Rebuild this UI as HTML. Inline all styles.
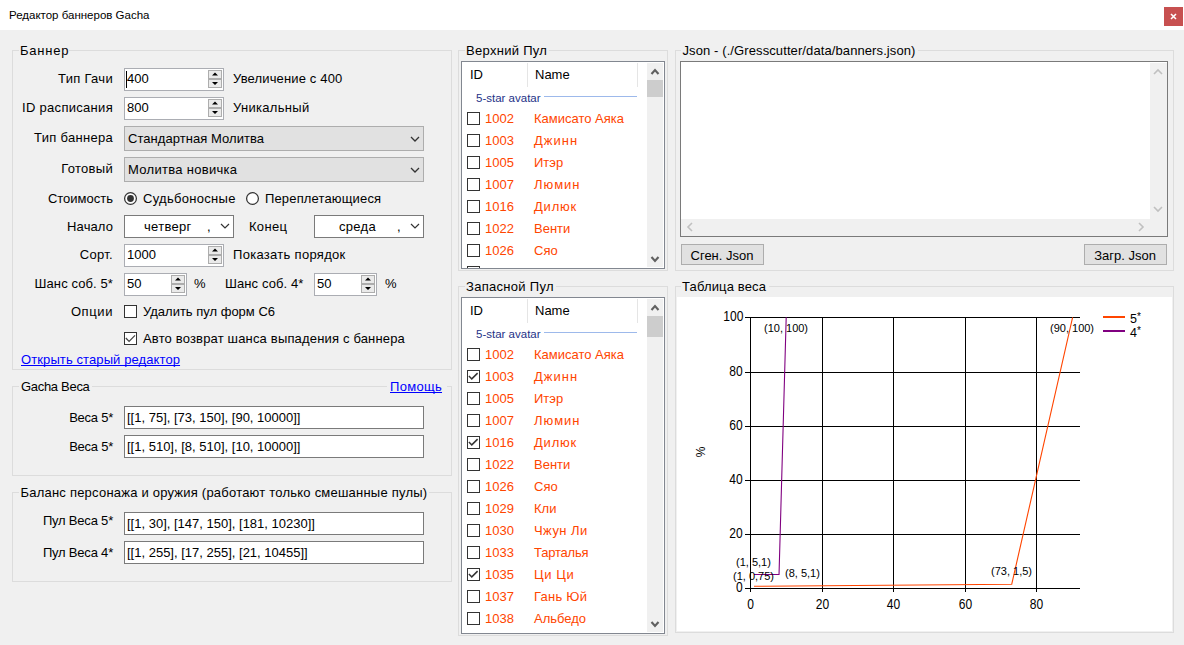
<!DOCTYPE html>
<html><head><meta charset="utf-8"><style>
html,body{margin:0;padding:0;}
body{width:1184px;height:645px;position:relative;overflow:hidden;background:#f0f0f0;font-family:"Liberation Sans",sans-serif;font-size:13px;color:#000;}
.t{position:absolute;white-space:nowrap;}
.r{position:absolute;}
svg.r{overflow:visible;}
</style></head><body>

<div class="r" style="left:0px;top:0px;width:1184px;height:30px;background:#fff;"></div>
<div class="t" style="left:9px;top:8px;font-size:11.5px;line-height:15px;color:#000;">Редактор баннеров Gacha</div>
<div class="r" style="left:1164px;top:7px;width:19px;height:19px;background:#c75050;"></div>
<svg class="r" style="left:1164px;top:7px" width="19" height="19"><path d="M7 7 L12 12 M12 7 L7 12" stroke="#fff" stroke-width="1.6"/></svg>
<div class="r" style="left:12px;top:50px;width:440px;height:320px;border:1px solid #dcdcdc;box-sizing:border-box;"></div>
<div class="r" style="left:19px;top:50px;width:50px;height:1px;background:#f0f0f0;"></div>
<div class="t" style="left:20px;top:43px;font-size:13px;line-height:15px;color:#000;letter-spacing:0.8px;">Баннер</div>
<div class="t" style="right:1071px;top:71px;font-size:13px;line-height:15px;color:#000;text-align:right;letter-spacing:0.3px;">Тип Гачи</div>
<div class="r" style="left:124px;top:68px;width:100px;height:23px;border:1px solid #abadb3;box-sizing:border-box;background:#fff;"></div>
<div class="r" style="left:208px;top:70px;width:14px;height:9px;border:1px solid #adadad;box-sizing:border-box;background:#eaeaea;"></div>
<div class="r" style="left:208px;top:79px;width:14px;height:9px;border:1px solid #adadad;box-sizing:border-box;background:#eaeaea;"></div>
<svg class="r" style="left:208px;top:70px" width="14" height="18"><path d="M4.0 5.5 L7.0 2.5 L10.0 5.5Z M4.0 12 L7.0 15 L10.0 12Z" fill="#000"/></svg>
<div class="t" style="left:127px;top:71px;font-size:13px;line-height:15px;color:#000;">400</div>
<div class="r" style="left:126px;top:71px;width:1px;height:17px;background:#000;"></div>
<div class="t" style="left:233px;top:71px;font-size:13px;line-height:15px;color:#000;letter-spacing:0.15px;">Увеличение с 400</div>
<div class="t" style="right:1071px;top:100px;font-size:13px;line-height:15px;color:#000;text-align:right;letter-spacing:0.3px;">ID расписания</div>
<div class="r" style="left:124px;top:97px;width:100px;height:23px;border:1px solid #abadb3;box-sizing:border-box;background:#fff;"></div>
<div class="r" style="left:208px;top:99px;width:14px;height:9px;border:1px solid #adadad;box-sizing:border-box;background:#eaeaea;"></div>
<div class="r" style="left:208px;top:108px;width:14px;height:9px;border:1px solid #adadad;box-sizing:border-box;background:#eaeaea;"></div>
<svg class="r" style="left:208px;top:99px" width="14" height="18"><path d="M4.0 5.5 L7.0 2.5 L10.0 5.5Z M4.0 12 L7.0 15 L10.0 12Z" fill="#000"/></svg>
<div class="t" style="left:127px;top:100px;font-size:13px;line-height:15px;color:#000;">800</div>
<div class="t" style="left:233px;top:100px;font-size:13px;line-height:15px;color:#000;letter-spacing:0.3px;">Уникальный</div>
<div class="t" style="right:1071px;top:130px;font-size:13px;line-height:15px;color:#000;text-align:right;letter-spacing:0.3px;">Тип баннера</div>
<div class="r" style="left:124px;top:126px;width:300px;height:25px;border:1px solid #adadad;box-sizing:border-box;background:#e1e1e1;"></div>
<div class="t" style="left:128px;top:131px;font-size:13px;line-height:15px;color:#000;letter-spacing:0.05px;">Стандартная Молитва</div>
<svg class="r" style="left:405.0px;top:128.5px" width="20" height="20"><path d="M6.0 8.0 L10.0 12.0 L14.0 8.0" fill="none" stroke="#333" stroke-width="1.3"/></svg>
<div class="t" style="right:1071px;top:161px;font-size:13px;line-height:15px;color:#000;text-align:right;letter-spacing:0.3px;">Готовый</div>
<div class="r" style="left:124px;top:157px;width:300px;height:25px;border:1px solid #adadad;box-sizing:border-box;background:#e1e1e1;"></div>
<div class="t" style="left:128px;top:162px;font-size:13px;line-height:15px;color:#000;letter-spacing:0.3px;">Молитва новичка</div>
<svg class="r" style="left:405.0px;top:159.5px" width="20" height="20"><path d="M6.0 8.0 L10.0 12.0 L14.0 8.0" fill="none" stroke="#333" stroke-width="1.3"/></svg>
<div class="t" style="right:1071px;top:191px;font-size:13px;line-height:15px;color:#000;text-align:right;letter-spacing:0px;">Стоимость</div>
<svg class="r" style="left:124px;top:192.0px" width="13" height="13"><circle cx="6.5" cy="6.5" r="5.9" fill="#fff" stroke="#333" stroke-width="1.25"/><circle cx="6.5" cy="6.5" r="3.4" fill="#333"/></svg>
<div class="t" style="left:143px;top:191px;font-size:13px;line-height:15px;color:#000;letter-spacing:0.3px;">Судьбоносные</div>
<svg class="r" style="left:246px;top:192.0px" width="13" height="13"><circle cx="6.5" cy="6.5" r="5.9" fill="#fff" stroke="#333" stroke-width="1.25"/></svg>
<div class="t" style="left:265px;top:191px;font-size:13px;line-height:15px;color:#000;letter-spacing:0.15px;">Переплетающиеся</div>
<div class="t" style="right:1071px;top:219px;font-size:13px;line-height:15px;color:#000;text-align:right;letter-spacing:0.1px;">Начало</div>
<div class="r" style="left:124px;top:215px;width:110px;height:23px;border:1px solid #7a7a7a;box-sizing:border-box;background:#fff;"></div>
<div class="t" style="left:144px;top:219px;font-size:13px;line-height:15px;color:#000;letter-spacing:0.3px;">четверг</div>
<div class="t" style="left:207px;top:219px;font-size:13px;line-height:15px;color:#000;">,</div>
<svg class="r" style="left:215.0px;top:216.0px" width="20" height="20"><path d="M6.0 8.0 L10.0 12.0 L14.0 8.0" fill="none" stroke="#333" stroke-width="1.2"/></svg>
<div class="t" style="left:249px;top:219px;font-size:13px;line-height:15px;color:#000;letter-spacing:0.3px;">Конец</div>
<div class="r" style="left:314px;top:215px;width:110px;height:23px;border:1px solid #7a7a7a;box-sizing:border-box;background:#fff;"></div>
<div class="t" style="left:339px;top:219px;font-size:13px;line-height:15px;color:#000;letter-spacing:0.3px;">среда</div>
<div class="t" style="left:397px;top:219px;font-size:13px;line-height:15px;color:#000;">,</div>
<svg class="r" style="left:405.0px;top:216.0px" width="20" height="20"><path d="M6.0 8.0 L10.0 12.0 L14.0 8.0" fill="none" stroke="#333" stroke-width="1.2"/></svg>
<div class="t" style="right:1071px;top:247px;font-size:13px;line-height:15px;color:#000;text-align:right;letter-spacing:0.3px;">Сорт.</div>
<div class="r" style="left:124px;top:244px;width:100px;height:23px;border:1px solid #abadb3;box-sizing:border-box;background:#fff;"></div>
<div class="r" style="left:208px;top:246px;width:14px;height:9px;border:1px solid #adadad;box-sizing:border-box;background:#eaeaea;"></div>
<div class="r" style="left:208px;top:255px;width:14px;height:9px;border:1px solid #adadad;box-sizing:border-box;background:#eaeaea;"></div>
<svg class="r" style="left:208px;top:246px" width="14" height="18"><path d="M4.0 5.5 L7.0 2.5 L10.0 5.5Z M4.0 12 L7.0 15 L10.0 12Z" fill="#000"/></svg>
<div class="t" style="left:127px;top:247px;font-size:13px;line-height:15px;color:#000;">1000</div>
<div class="t" style="left:233px;top:247px;font-size:13px;line-height:15px;color:#000;letter-spacing:0.3px;">Показать порядок</div>
<div class="t" style="right:1071px;top:276px;font-size:13px;line-height:15px;color:#000;text-align:right;letter-spacing:0.1px;">Шанс соб. 5*</div>
<div class="r" style="left:124px;top:273px;width:63px;height:23px;border:1px solid #abadb3;box-sizing:border-box;background:#fff;"></div>
<div class="r" style="left:171px;top:275px;width:14px;height:9px;border:1px solid #adadad;box-sizing:border-box;background:#eaeaea;"></div>
<div class="r" style="left:171px;top:284px;width:14px;height:9px;border:1px solid #adadad;box-sizing:border-box;background:#eaeaea;"></div>
<svg class="r" style="left:171px;top:275px" width="14" height="18"><path d="M4.0 5.5 L7.0 2.5 L10.0 5.5Z M4.0 12 L7.0 15 L10.0 12Z" fill="#000"/></svg>
<div class="t" style="left:127px;top:276px;font-size:13px;line-height:15px;color:#000;">50</div>
<div class="t" style="left:194px;top:276px;font-size:13px;line-height:15px;color:#000;">%</div>
<div class="t" style="left:225px;top:276px;font-size:13px;line-height:15px;color:#000;letter-spacing:0.1px;">Шанс соб. 4*</div>
<div class="r" style="left:314px;top:273px;width:63px;height:23px;border:1px solid #abadb3;box-sizing:border-box;background:#fff;"></div>
<div class="r" style="left:361px;top:275px;width:14px;height:9px;border:1px solid #adadad;box-sizing:border-box;background:#eaeaea;"></div>
<div class="r" style="left:361px;top:284px;width:14px;height:9px;border:1px solid #adadad;box-sizing:border-box;background:#eaeaea;"></div>
<svg class="r" style="left:361px;top:275px" width="14" height="18"><path d="M4.0 5.5 L7.0 2.5 L10.0 5.5Z M4.0 12 L7.0 15 L10.0 12Z" fill="#000"/></svg>
<div class="t" style="left:317px;top:276px;font-size:13px;line-height:15px;color:#000;">50</div>
<div class="t" style="left:385px;top:276px;font-size:13px;line-height:15px;color:#000;">%</div>
<div class="t" style="right:1071px;top:304px;font-size:13px;line-height:15px;color:#000;text-align:right;letter-spacing:0.6px;">Опции</div>
<div class="r" style="left:124px;top:305px;width:13px;height:13px;border:1px solid #333;box-sizing:border-box;background:#fff;"></div>
<div class="t" style="left:143px;top:304px;font-size:13px;line-height:15px;color:#000;letter-spacing:0px;">Удалить пул форм С6</div>
<div class="r" style="left:124px;top:332px;width:13px;height:13px;border:1px solid #333;box-sizing:border-box;background:#fff;"></div>
<svg class="r" style="left:124px;top:332px" width="13" height="13"><path d="M1.8 6 L5.1 9.4 L11 3.4" fill="none" stroke="#444" stroke-width="1.25"/></svg>
<div class="t" style="left:143px;top:331px;font-size:13px;line-height:15px;color:#000;letter-spacing:0.17px;">Авто возврат шанса выпадения с баннера</div>
<div class="t" style="left:21px;top:352px;font-size:13px;line-height:15px;color:#0000ff;letter-spacing:0.1px;text-decoration:underline;text-decoration-skip-ink:none;">Открыть старый редактор</div>
<div class="r" style="left:12px;top:386px;width:440px;height:90px;border:1px solid #dcdcdc;box-sizing:border-box;"></div>
<div class="r" style="left:19px;top:386px;width:73px;height:1px;background:#f0f0f0;"></div>
<div class="t" style="left:21px;top:379px;font-size:13px;line-height:15px;color:#000;letter-spacing:-0.3px;">Gacha Веса</div>
<div class="r" style="left:387px;top:386px;width:60px;height:1px;background:#f0f0f0;"></div>
<div class="t" style="left:390px;top:379px;font-size:13px;line-height:15px;color:#0000ff;letter-spacing:0.3px;text-decoration:underline;text-decoration-skip-ink:none;">Помощь</div>
<div class="t" style="right:1071px;top:410px;font-size:13px;line-height:15px;color:#000;text-align:right;letter-spacing:-0.25px;">Веса 5*</div>
<div class="r" style="left:124px;top:406px;width:300px;height:23px;border:1px solid #7a7a7a;box-sizing:border-box;background:#fff;"></div>
<div class="t" style="left:127px;top:410px;font-size:13px;line-height:15px;color:#000;">[[1, 75], [73, 150], [90, 10000]]</div>
<div class="t" style="right:1071px;top:439px;font-size:13px;line-height:15px;color:#000;text-align:right;letter-spacing:-0.25px;">Веса 5*</div>
<div class="r" style="left:124px;top:435px;width:300px;height:23px;border:1px solid #7a7a7a;box-sizing:border-box;background:#fff;"></div>
<div class="t" style="left:127px;top:439px;font-size:13px;line-height:15px;color:#000;">[[1, 510], [8, 510], [10, 10000]]</div>
<div class="r" style="left:12px;top:492px;width:440px;height:90px;border:1px solid #dcdcdc;box-sizing:border-box;"></div>
<div class="r" style="left:19px;top:492px;width:410px;height:1px;background:#f0f0f0;"></div>
<div class="t" style="left:20.5px;top:485px;font-size:13px;line-height:15px;color:#000;letter-spacing:0.22px;">Баланс персонажа и оружия (работают только смешанные пулы)</div>
<div class="t" style="right:1071px;top:513px;font-size:13px;line-height:15px;color:#000;text-align:right;letter-spacing:-0.2px;">Пул Веса 5*</div>
<div class="r" style="left:124px;top:512px;width:300px;height:23px;border:1px solid #7a7a7a;box-sizing:border-box;background:#fff;"></div>
<div class="t" style="left:127px;top:516px;font-size:13px;line-height:15px;color:#000;">[[1, 30], [147, 150], [181, 10230]]</div>
<div class="t" style="right:1071px;top:545px;font-size:13px;line-height:15px;color:#000;text-align:right;letter-spacing:-0.2px;">Пул Веса 4*</div>
<div class="r" style="left:124px;top:541px;width:300px;height:23px;border:1px solid #7a7a7a;box-sizing:border-box;background:#fff;"></div>
<div class="t" style="left:127px;top:545px;font-size:13px;line-height:15px;color:#000;">[[1, 255], [17, 255], [21, 10455]]</div>
<div class="r" style="left:458px;top:50px;width:210px;height:221px;border:1px solid #dcdcdc;box-sizing:border-box;"></div>
<div class="r" style="left:465px;top:50px;width:84px;height:1px;background:#f0f0f0;"></div>
<div class="t" style="left:466px;top:43px;font-size:13px;line-height:15px;color:#000;letter-spacing:0.3px;">Верхний Пул</div>
<div class="r" style="left:461px;top:61px;width:204px;height:208px;border:1px solid #828790;box-sizing:border-box;background:#fff;"></div>
<div class="t" style="left:470px;top:67px;font-size:13px;line-height:15px;color:#000;">ID</div>
<div class="r" style="left:527px;top:63px;width:1px;height:24px;background:#e5e5e5;"></div>
<div class="t" style="left:535px;top:67px;font-size:13px;line-height:15px;color:#000;">Name</div>
<div class="r" style="left:637px;top:63px;width:1px;height:24px;background:#e5e5e5;"></div>
<div class="t" style="left:476px;top:91px;font-size:11.5px;line-height:15px;color:#1e3287;">5-star avatar</div>
<div class="r" style="left:544px;top:96px;width:93px;height:1px;background:#9db9eb;"></div>
<div class="r" style="left:462px;top:62px;width:185px;height:206px;overflow:hidden">
<div class="r" style="left:5px;top:50px;width:13px;height:13px;box-sizing:border-box;border:1px solid #333;background:#fff"></div>
<div class="t" style="left:23px;top:49px;line-height:15px;color:#ff4500">1002</div>
<div class="t" style="left:72px;top:49px;line-height:15px;color:#ff4500;letter-spacing:0px">Камисато Аяка</div>
<div class="r" style="left:5px;top:72px;width:13px;height:13px;box-sizing:border-box;border:1px solid #333;background:#fff"></div>
<div class="t" style="left:23px;top:71px;line-height:15px;color:#ff4500">1003</div>
<div class="t" style="left:72px;top:71px;line-height:15px;color:#ff4500;letter-spacing:1.0px">Джинн</div>
<div class="r" style="left:5px;top:94px;width:13px;height:13px;box-sizing:border-box;border:1px solid #333;background:#fff"></div>
<div class="t" style="left:23px;top:93px;line-height:15px;color:#ff4500">1005</div>
<div class="t" style="left:72px;top:93px;line-height:15px;color:#ff4500;letter-spacing:0px">Итэр</div>
<div class="r" style="left:5px;top:116px;width:13px;height:13px;box-sizing:border-box;border:1px solid #333;background:#fff"></div>
<div class="t" style="left:23px;top:115px;line-height:15px;color:#ff4500">1007</div>
<div class="t" style="left:72px;top:115px;line-height:15px;color:#ff4500;letter-spacing:1.0px">Люмин</div>
<div class="r" style="left:5px;top:138px;width:13px;height:13px;box-sizing:border-box;border:1px solid #333;background:#fff"></div>
<div class="t" style="left:23px;top:137px;line-height:15px;color:#ff4500">1016</div>
<div class="t" style="left:72px;top:137px;line-height:15px;color:#ff4500;letter-spacing:0.8px">Дилюк</div>
<div class="r" style="left:5px;top:160px;width:13px;height:13px;box-sizing:border-box;border:1px solid #333;background:#fff"></div>
<div class="t" style="left:23px;top:159px;line-height:15px;color:#ff4500">1022</div>
<div class="t" style="left:72px;top:159px;line-height:15px;color:#ff4500;letter-spacing:0px">Венти</div>
<div class="r" style="left:5px;top:182px;width:13px;height:13px;box-sizing:border-box;border:1px solid #333;background:#fff"></div>
<div class="t" style="left:23px;top:181px;line-height:15px;color:#ff4500">1026</div>
<div class="t" style="left:72px;top:181px;line-height:15px;color:#ff4500;letter-spacing:0px">Сяо</div>
<div class="r" style="left:5px;top:204px;width:13px;height:13px;box-sizing:border-box;border:1px solid #333;background:#fff"></div>
<div class="t" style="left:23px;top:203px;line-height:15px;color:#ff4500">1029</div>
<div class="t" style="left:72px;top:203px;line-height:15px;color:#ff4500;letter-spacing:0px">Кли</div>
</div>
<div class="r" style="left:647px;top:63px;width:16px;height:204px;background:#f0f0f0;"></div>
<div class="r" style="left:647px;top:80px;width:16px;height:17px;background:#cdcdcd;"></div>
<svg class="r" style="left:644.5px;top:62.0px" width="20" height="20"><path d="M6.5 12.0 L10.0 8.0 L13.5 12.0" fill="none" stroke="#606060" stroke-width="2.1"/></svg>
<svg class="r" style="left:644.5px;top:248.5px" width="20" height="20"><path d="M6.5 8.0 L10.0 12.0 L13.5 8.0" fill="none" stroke="#606060" stroke-width="2.1"/></svg>
<div class="r" style="left:458px;top:286px;width:210px;height:350px;border:1px solid #dcdcdc;box-sizing:border-box;"></div>
<div class="r" style="left:465px;top:286px;width:91px;height:1px;background:#f0f0f0;"></div>
<div class="t" style="left:466px;top:279px;font-size:13px;line-height:15px;color:#000;letter-spacing:0.3px;">Запасной Пул</div>
<div class="r" style="left:461px;top:297px;width:204px;height:337px;border:1px solid #828790;box-sizing:border-box;background:#fff;"></div>
<div class="t" style="left:470px;top:303px;font-size:13px;line-height:15px;color:#000;">ID</div>
<div class="r" style="left:527px;top:299px;width:1px;height:24px;background:#e5e5e5;"></div>
<div class="t" style="left:535px;top:303px;font-size:13px;line-height:15px;color:#000;">Name</div>
<div class="r" style="left:637px;top:299px;width:1px;height:24px;background:#e5e5e5;"></div>
<div class="t" style="left:476px;top:327px;font-size:11.5px;line-height:15px;color:#1e3287;">5-star avatar</div>
<div class="r" style="left:544px;top:332px;width:93px;height:1px;background:#9db9eb;"></div>
<div class="r" style="left:462px;top:298px;width:185px;height:335px;overflow:hidden">
<div class="r" style="left:5px;top:50px;width:13px;height:13px;box-sizing:border-box;border:1px solid #333;background:#fff"></div>
<div class="t" style="left:23px;top:49px;line-height:15px;color:#ff4500">1002</div>
<div class="t" style="left:72px;top:49px;line-height:15px;color:#ff4500;letter-spacing:0px">Камисато Аяка</div>
<div class="r" style="left:5px;top:72px;width:13px;height:13px;box-sizing:border-box;border:1px solid #333;background:#fff"></div>
<svg class="r" style="left:5px;top:72px" width="13" height="13"><path d="M1.9 5.9 L4.8 8.9 L10.6 3.1" fill="none" stroke="#333" stroke-width="1.5"/></svg>
<div class="t" style="left:23px;top:71px;line-height:15px;color:#ff4500">1003</div>
<div class="t" style="left:72px;top:71px;line-height:15px;color:#ff4500;letter-spacing:1.0px">Джинн</div>
<div class="r" style="left:5px;top:94px;width:13px;height:13px;box-sizing:border-box;border:1px solid #333;background:#fff"></div>
<div class="t" style="left:23px;top:93px;line-height:15px;color:#ff4500">1005</div>
<div class="t" style="left:72px;top:93px;line-height:15px;color:#ff4500;letter-spacing:0px">Итэр</div>
<div class="r" style="left:5px;top:116px;width:13px;height:13px;box-sizing:border-box;border:1px solid #333;background:#fff"></div>
<div class="t" style="left:23px;top:115px;line-height:15px;color:#ff4500">1007</div>
<div class="t" style="left:72px;top:115px;line-height:15px;color:#ff4500;letter-spacing:1.0px">Люмин</div>
<div class="r" style="left:5px;top:138px;width:13px;height:13px;box-sizing:border-box;border:1px solid #333;background:#fff"></div>
<svg class="r" style="left:5px;top:138px" width="13" height="13"><path d="M1.9 5.9 L4.8 8.9 L10.6 3.1" fill="none" stroke="#333" stroke-width="1.5"/></svg>
<div class="t" style="left:23px;top:137px;line-height:15px;color:#ff4500">1016</div>
<div class="t" style="left:72px;top:137px;line-height:15px;color:#ff4500;letter-spacing:0.8px">Дилюк</div>
<div class="r" style="left:5px;top:160px;width:13px;height:13px;box-sizing:border-box;border:1px solid #333;background:#fff"></div>
<div class="t" style="left:23px;top:159px;line-height:15px;color:#ff4500">1022</div>
<div class="t" style="left:72px;top:159px;line-height:15px;color:#ff4500;letter-spacing:0px">Венти</div>
<div class="r" style="left:5px;top:182px;width:13px;height:13px;box-sizing:border-box;border:1px solid #333;background:#fff"></div>
<div class="t" style="left:23px;top:181px;line-height:15px;color:#ff4500">1026</div>
<div class="t" style="left:72px;top:181px;line-height:15px;color:#ff4500;letter-spacing:0px">Сяо</div>
<div class="r" style="left:5px;top:204px;width:13px;height:13px;box-sizing:border-box;border:1px solid #333;background:#fff"></div>
<div class="t" style="left:23px;top:203px;line-height:15px;color:#ff4500">1029</div>
<div class="t" style="left:72px;top:203px;line-height:15px;color:#ff4500;letter-spacing:0px">Кли</div>
<div class="r" style="left:5px;top:226px;width:13px;height:13px;box-sizing:border-box;border:1px solid #333;background:#fff"></div>
<div class="t" style="left:23px;top:225px;line-height:15px;color:#ff4500">1030</div>
<div class="t" style="left:72px;top:225px;line-height:15px;color:#ff4500;letter-spacing:0.45px">Чжун Ли</div>
<div class="r" style="left:5px;top:248px;width:13px;height:13px;box-sizing:border-box;border:1px solid #333;background:#fff"></div>
<div class="t" style="left:23px;top:247px;line-height:15px;color:#ff4500">1033</div>
<div class="t" style="left:72px;top:247px;line-height:15px;color:#ff4500;letter-spacing:-0.2px">Тарталья</div>
<div class="r" style="left:5px;top:270px;width:13px;height:13px;box-sizing:border-box;border:1px solid #333;background:#fff"></div>
<svg class="r" style="left:5px;top:270px" width="13" height="13"><path d="M1.9 5.9 L4.8 8.9 L10.6 3.1" fill="none" stroke="#333" stroke-width="1.5"/></svg>
<div class="t" style="left:23px;top:269px;line-height:15px;color:#ff4500">1035</div>
<div class="t" style="left:72px;top:269px;line-height:15px;color:#ff4500;letter-spacing:0.6px">Ци Ци</div>
<div class="r" style="left:5px;top:292px;width:13px;height:13px;box-sizing:border-box;border:1px solid #333;background:#fff"></div>
<div class="t" style="left:23px;top:291px;line-height:15px;color:#ff4500">1037</div>
<div class="t" style="left:72px;top:291px;line-height:15px;color:#ff4500;letter-spacing:0.25px">Гань Юй</div>
<div class="r" style="left:5px;top:314px;width:13px;height:13px;box-sizing:border-box;border:1px solid #333;background:#fff"></div>
<div class="t" style="left:23px;top:313px;line-height:15px;color:#ff4500">1038</div>
<div class="t" style="left:72px;top:313px;line-height:15px;color:#ff4500;letter-spacing:0px">Альбедо</div>
</div>
<div class="r" style="left:647px;top:299px;width:16px;height:333px;background:#f0f0f0;"></div>
<div class="r" style="left:647px;top:316px;width:16px;height:21px;background:#cdcdcd;"></div>
<svg class="r" style="left:644.5px;top:298.0px" width="20" height="20"><path d="M6.5 12.0 L10.0 8.0 L13.5 12.0" fill="none" stroke="#606060" stroke-width="2.1"/></svg>
<svg class="r" style="left:644.5px;top:613.5px" width="20" height="20"><path d="M6.5 8.0 L10.0 12.0 L13.5 8.0" fill="none" stroke="#606060" stroke-width="2.1"/></svg>
<div class="r" style="left:675px;top:50px;width:499px;height:221px;border:1px solid #dcdcdc;box-sizing:border-box;"></div>
<div class="r" style="left:681px;top:50px;width:237px;height:1px;background:#f0f0f0;"></div>
<div class="t" style="left:682.5px;top:43px;font-size:13px;line-height:15px;color:#000;letter-spacing:0.1px;">Json - (./Gresscutter/data/banners.json)</div>
<div class="r" style="left:680px;top:61px;width:488px;height:176px;border:1px solid #7a7a7a;box-sizing:border-box;background:#fff;"></div>
<div class="r" style="left:1150px;top:63px;width:17px;height:156px;background:#f0f0f0;"></div>
<div class="r" style="left:681px;top:219px;width:486px;height:17px;background:#f0f0f0;"></div>
<svg class="r" style="left:1148.0px;top:62.0px" width="20" height="20"><path d="M6.0 12.0 L10.0 8.0 L14.0 12.0" fill="none" stroke="#c0c0c0" stroke-width="1.6"/></svg>
<svg class="r" style="left:1148.0px;top:199.0px" width="20" height="20"><path d="M6.0 8.0 L10.0 12.0 L14.0 8.0" fill="none" stroke="#c0c0c0" stroke-width="1.6"/></svg>
<svg class="r" style="left:680.0px;top:217.0px" width="20" height="20"><path d="M12.0 6.0 L8.0 10.0 L12.0 14.0" fill="none" stroke="#c0c0c0" stroke-width="1.6"/></svg>
<svg class="r" style="left:1131.0px;top:217.0px" width="20" height="20"><path d="M8.0 6.0 L12.0 10.0 L8.0 14.0" fill="none" stroke="#c0c0c0" stroke-width="1.6"/></svg>
<div class="r" style="left:681px;top:244px;width:83px;height:21px;border:1px solid #adadad;box-sizing:border-box;background:#e1e1e1;"></div>
<div class="t" style="left:622px;width:200px;top:248px;font-size:13px;line-height:15px;color:#000;text-align:center;">Сген. Json</div>
<div class="r" style="left:1084px;top:244px;width:83px;height:21px;border:1px solid #adadad;box-sizing:border-box;background:#e1e1e1;"></div>
<div class="t" style="left:1025px;width:200px;top:248px;font-size:13px;line-height:15px;color:#000;text-align:center;">Загр. Json</div>
<div class="r" style="left:675px;top:286px;width:499px;height:347px;border:1px solid #dcdcdc;box-sizing:border-box;"></div>
<div class="r" style="left:681px;top:286px;width:88px;height:1px;background:#f0f0f0;"></div>
<div class="t" style="left:682px;top:279px;font-size:13px;line-height:15px;color:#000;letter-spacing:0.15px;">Таблица веса</div>
<div class="r" style="left:677px;top:297px;width:495px;height:334px;background:#fff;"></div>
<svg class="r" style="left:0px;top:0px" width="1184" height="645" shape-rendering="crispEdges"><line x1="745" y1="588.5" x2="1080" y2="588.5" stroke="#000" stroke-width="1"/><line x1="745" y1="534.5" x2="1080" y2="534.5" stroke="#000" stroke-width="1"/><line x1="745" y1="480.5" x2="1080" y2="480.5" stroke="#000" stroke-width="1"/><line x1="745" y1="426.5" x2="1080" y2="426.5" stroke="#000" stroke-width="1"/><line x1="745" y1="372.5" x2="1080" y2="372.5" stroke="#000" stroke-width="1"/><line x1="745" y1="317.5" x2="1080" y2="317.5" stroke="#000" stroke-width="1"/><line x1="750.5" y1="317" x2="750.5" y2="592" stroke="#000" stroke-width="1"/><line x1="822.5" y1="317" x2="822.5" y2="592" stroke="#000" stroke-width="1"/><line x1="893.5" y1="317" x2="893.5" y2="592" stroke="#000" stroke-width="1"/><line x1="965.5" y1="317" x2="965.5" y2="592" stroke="#000" stroke-width="1"/><line x1="1036.5" y1="317" x2="1036.5" y2="592" stroke="#000" stroke-width="1"/></svg>
<svg class="r" style="left:0px;top:0px" width="1184" height="645"><polyline points="753.98,586.27 1011.74,584.23 1072.60,317.30" fill="none" stroke="#ff4500" stroke-width="1.1"/><polyline points="753.98,574.48 779.04,574.48 786.20,317.30" fill="none" stroke="#800080" stroke-width="1.1"/></svg>
<div class="t" style="right:441px;top:579px;font-size:14px;line-height:16px;transform:scaleX(0.86);transform-origin:100% 50%;">0</div>
<div class="t" style="right:441px;top:525px;font-size:14px;line-height:16px;transform:scaleX(0.86);transform-origin:100% 50%;">20</div>
<div class="t" style="right:441px;top:471px;font-size:14px;line-height:16px;transform:scaleX(0.86);transform-origin:100% 50%;">40</div>
<div class="t" style="right:441px;top:417px;font-size:14px;line-height:16px;transform:scaleX(0.86);transform-origin:100% 50%;">60</div>
<div class="t" style="right:441px;top:363px;font-size:14px;line-height:16px;transform:scaleX(0.86);transform-origin:100% 50%;">80</div>
<div class="t" style="right:441px;top:308px;font-size:14px;line-height:16px;transform:scaleX(0.86);transform-origin:100% 50%;">100</div>
<div class="t" style="left:700px;width:101px;text-align:center;top:596px;font-size:14px;line-height:16px;transform:scaleX(0.86);">0</div>
<div class="t" style="left:772px;width:101px;text-align:center;top:596px;font-size:14px;line-height:16px;transform:scaleX(0.86);">20</div>
<div class="t" style="left:843px;width:101px;text-align:center;top:596px;font-size:14px;line-height:16px;transform:scaleX(0.86);">40</div>
<div class="t" style="left:915px;width:101px;text-align:center;top:596px;font-size:14px;line-height:16px;transform:scaleX(0.86);">60</div>
<div class="t" style="left:986px;width:101px;text-align:center;top:596px;font-size:14px;line-height:16px;transform:scaleX(0.86);">80</div>
<div class="t" style="left:764px;top:321px;font-size:11px;line-height:15px;color:#000;">(10, 100)</div>
<div class="t" style="left:1050px;top:321px;font-size:11px;line-height:15px;color:#000;">(90, 100)</div>
<div class="t" style="left:736px;top:555px;font-size:11px;line-height:15px;color:#000;">(1, 5,1)</div>
<div class="t" style="left:733px;top:569px;font-size:11px;line-height:15px;color:#000;">(1, 0,75)</div>
<div class="t" style="left:785px;top:566px;font-size:11px;line-height:15px;color:#000;">(8, 5,1)</div>
<div class="t" style="left:991px;top:564px;font-size:11px;line-height:15px;color:#000;">(73, 1,5)</div>
<div class="t" style="left:691px;top:445px;width:20px;height:14px;font-size:12px;line-height:14px;text-align:center;transform:rotate(-90deg);">%</div>
<div class="r" style="left:1103px;top:316px;width:22px;height:2px;background:#ff4500;"></div>
<div class="r" style="left:1103px;top:330px;width:22px;height:2px;background:#800080;"></div>
<div class="t" style="left:1130px;top:309px;font-size:12.5px;line-height:15px;color:#000;">5<span style="font-size:10px;vertical-align:3px">*</span></div>
<div class="t" style="left:1130px;top:323px;font-size:12.5px;line-height:15px;color:#000;">4<span style="font-size:10px;vertical-align:3px">*</span></div>
</body></html>
